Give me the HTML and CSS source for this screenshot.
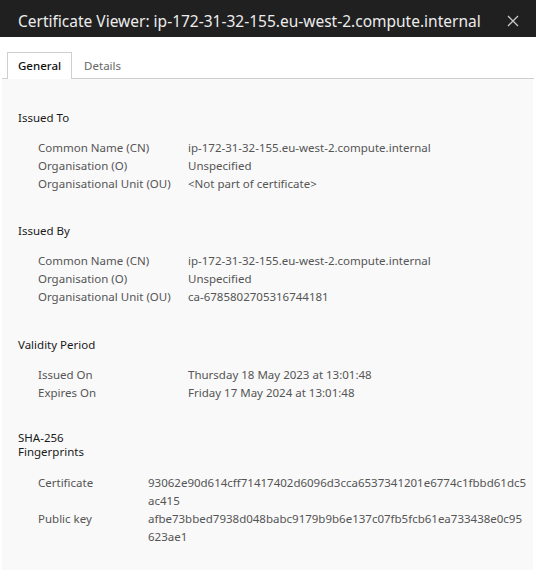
FILE: index.html
```html
<!DOCTYPE html>
<html>
<head>
<meta charset="utf-8">
<link rel="stylesheet" href="styles.css">
</head>
<body>
<div class="dialog">
  <div class="titlebar">
    <span class="title">Certificate Viewer: ip-172-31-32-155.eu-west-2.compute.internal</span>
    <svg class="close" width="12" height="12" viewBox="0 0 12 12"><path d="M1 1L11 11M11 1L1 11" stroke="#c8c8c8" stroke-width="1.3" fill="none"/></svg>
  </div>
  <div class="tabs">
    <div class="tab active">General</div>
    <div class="tab">Details</div>
  </div>
  <div class="panel">
    <section class="section">
      <h2 class="heading">Issued To</h2>
      <div class="grid">
        <div class="label">Common Name (CN)</div><div class="value">ip-172-31-32-155.eu-west-2.compute.internal</div>
        <div class="label">Organisation (O)</div><div class="value">Unspecified</div>
        <div class="label">Organisational Unit (OU)</div><div class="value">&lt;Not part of certificate&gt;</div>
      </div>
    </section>
    <section class="section">
      <h2 class="heading">Issued By</h2>
      <div class="grid">
        <div class="label">Common Name (CN)</div><div class="value">ip-172-31-32-155.eu-west-2.compute.internal</div>
        <div class="label">Organisation (O)</div><div class="value">Unspecified</div>
        <div class="label">Organisational Unit (OU)</div><div class="value">ca-6785802705316744181</div>
      </div>
    </section>
    <section class="section">
      <h2 class="heading">Validity Period</h2>
      <div class="grid">
        <div class="label">Issued On</div><div class="value">Thursday 18 May 2023 at 13:01:48</div>
        <div class="label">Expires On</div><div class="value">Friday 17 May 2024 at 13:01:48</div>
      </div>
    </section>
    <section class="section">
      <h2 class="heading tight">SHA-256<br>Fingerprints</h2>
      <div class="grid fp">
        <div class="label">Certificate</div><div class="value">93062e90d614cff71417402d6096d3cca6537341201e6774c1fbbd61dc5ac415</div>
        <div class="label">Public key</div><div class="value">afbe73bbed7938d048babc9179b9b6e137c07fb5fcb61ea733438e0c95623ae1</div>
      </div>
    </section>
  </div>
</div>
</body>
</html>
```
FILE: styles.css
```css
html, body {
  margin: 0;
  padding: 0;
  background: #ffffff;
}
body {
  width: 536px;
  height: 570px;
  overflow: hidden;
  font-family: "Noto Sans", "Open Sans", sans-serif;
}
.dialog {
  display: flex;
  flex-direction: column;
  height: 570px;
}
.titlebar {
  height: 37px;
  flex: none;
  background: #202020;
  display: flex;
  align-items: center;
  justify-content: space-between;
  padding: 4px 17px 0 18px;
  box-sizing: border-box;
}
.title {
  color: #ececec;
  font-size: 15.5px;
  white-space: nowrap;
}
.close {
  display: block;
}
.tabs {
  flex: none;
  display: flex;
  padding: 15px 0 0 5px;
  border-bottom: 1px solid #cfcfcf;
  background: #ffffff;
  margin: 0 2px;
}
.tab {
  height: 25px;
  line-height: 25px;
  padding: 0 11px 0 11px;
  font-size: 11.5px;
  color: #666;
  margin-bottom: -1px;
  border: 1px solid transparent;
  border-bottom: none;
}
.tab.active {
  background: #ffffff;
  border-color: #cfcfcf;
  color: #111;
  font-weight: 500;
  height: 26px;
  padding: 0 10px 0 10px;
}
.panel {
  flex: 1;
  background: #f9f9f9;
  margin: 0 3px 3px 2px;
  padding: 30px 0 0 16px;
}
.section {
  margin-bottom: 29px;
}
.section:nth-child(2) {
  margin-bottom: 30px;
}
.heading {
  margin: 0 0 12px 0;
  font-size: 11.5px;
  font-weight: 400;
  color: #1a1a1a;
  line-height: 18px;
}
.heading.tight {
  line-height: 14px;
  margin-top: 1px;
  margin-bottom: 15px;
}
.grid {
  display: grid;
  grid-template-columns: 150px 1fr;
  padding-left: 20px;
  font-size: 11.5px;
  line-height: 18px;
  color: #555;
}
.grid.fp {
  grid-template-columns: 110px 380px;
}
.value {
  word-break: break-all;
}
```
